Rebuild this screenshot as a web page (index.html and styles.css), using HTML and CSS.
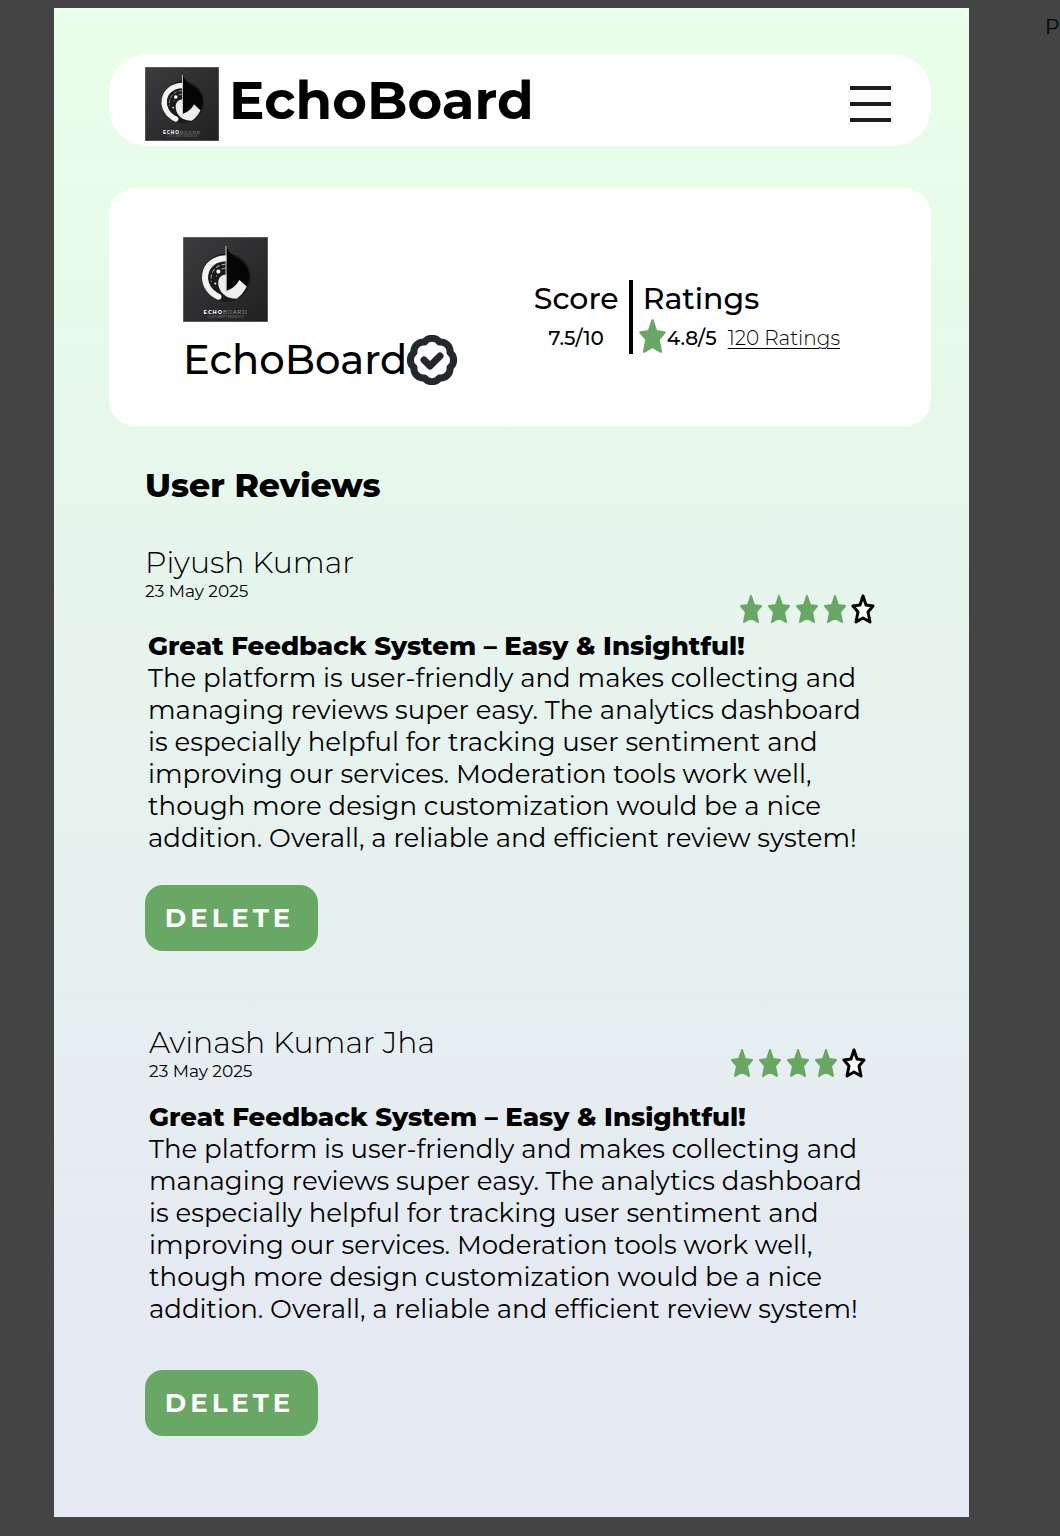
FILE: index.html
```html
<!DOCTYPE html>
<html lang="en">
<head>
<meta charset="utf-8">
<meta name="viewport" content="width=device-width, initial-scale=1">
<title>EchoBoard</title>
<link rel="stylesheet" href="styles.css">
</head>
<body>
<svg class="defs" aria-hidden="true">
  <defs>
    <linearGradient id="tile" x1="0" y1="0" x2="1" y2="1"><stop offset="0" stop-color="#3c3c3e"/><stop offset="1" stop-color="#202022"/></linearGradient>
    <linearGradient id="fold" x1="0" y1="0" x2="1" y2="0"><stop offset="0" stop-color="#999"/><stop offset=".5" stop-color="#eee"/></linearGradient>
    <symbol id="logo" viewBox="0 0 84 84">
      <path fill="url(#tile)" stroke="#888" d="M0 0h84v84H0z"/>
      <circle cx="43" cy="40" r="24" fill="#1a1a1b"/>
      <path fill="none" stroke="#f2f2f2" stroke-width="6" stroke-linecap="round" d="M42 21C18 22 15 50 35 59"/>
      <path fill="none" stroke="#aaa" stroke-dasharray="4 2" d="M42 27A14 14 0 0 0 28 44M42 31A9 9 0 0 0 33 39"/>
      <circle cx="35" cy="34" r="2" fill="#fff"/><circle cx="32" cy="46" r="1" fill="#fff"/>
      <path fill="#eee" d="M43 37C34 37 33 46 37 53Q42 61 53 61Q59 57 63 49L51 38Z"/>
      <path fill="url(#fold)" d="M43 38L56 42L43 54Z"/>
      <path fill="#050505" d="M43 9Q45 17 57 23Q70 34 63 49L56 42Q51 51 43 53Z"/>
      <path stroke="#ccc" d="M42.500 9V53"/>
      <text class="logo-name" x="42" y="76" text-anchor="middle"><tspan class="logo-strong">ECHO</tspan>BOARD</text>
      <text class="logo-tag" x="42" y="80" text-anchor="middle">CUSTOMER FEEDBACK</text>
    </symbol>
    <symbol id="star" viewBox="0 0 24 30"><path stroke-linejoin="round" d="M12 2L15 11L22 12L17 18L19 28L12 24L5 28L7 18L2 12L9 11Z"/></symbol>
  </defs>
</svg>
<main class="page">
  <header class="topbar">
    <svg class="topbar-logo" role="img" aria-label="EchoBoard logo"><use href="#logo"/></svg>
    <h1 class="brand">EchoBoard</h1>
    <button class="menu" type="button" aria-label="Menu"><svg viewBox="0 0 42 38"><path stroke="#1c1c1c" stroke-width="4" d="M1 3h41M1 19h41M1 35h41"/></svg></button>
  </header>

  <section class="summary">
    <div class="company">
      <svg class="company-logo" role="img" aria-label="EchoBoard logo"><use href="#logo"/></svg>
      <h2 class="company-name">EchoBoard
        <svg class="verified" viewBox="0 0 50 50" role="img" aria-label="Verified"><path fill="none" stroke="#24282e" stroke-width="7" stroke-linejoin="round" d="M17.500 7A9.500 9.500 0 0 1 32.500 7A9.500 9.500 0 0 1 43 17.500A9.500 9.500 0 0 1 43 32.500A9.500 9.500 0 0 1 32.500 43A9.500 9.500 0 0 1 17.500 43A9.500 9.500 0 0 1 7 32.500A9.500 9.500 0 0 1 7 17.500A9.500 9.500 0 0 1 17.500 7Z"/><path fill="none" stroke="#24282e" stroke-width="7" stroke-linecap="round" stroke-linejoin="round" d="M17 25L23 31L33 21"/></svg>
      </h2>
    </div>
    <div class="stats">
      <div class="score"><h3 class="stat-title">Score</h3><p class="stat-value">7.5/10</p></div>
      <div class="ratings">
        <h3 class="stat-title">Ratings</h3>
        <p class="stat-value rating-line"><svg class="rating-star"><use href="#star"/></svg>4.8/5<a class="rating-link" href="#reviews">120 Ratings</a></p>
      </div>
    </div>
  </section>

  <section class="reviews" id="reviews">
    <h2 class="reviews-title">User Reviews</h2>
    <article class="review">
      <div class="meta meta-tall">
        <div><h3 class="author">Piyush Kumar</h3><time class="date" datetime="2025-05-23">23 May 2025</time></div>
        <div class="stars" role="img" aria-label="4 out of 5 stars"><svg class="star"><use href="#star"/></svg><svg class="star"><use href="#star"/></svg><svg class="star"><use href="#star"/></svg><svg class="star"><use href="#star"/></svg><svg class="star star-empty"><use href="#star"/></svg></div>
      </div>
      <div class="comment">
        <h4 class="comment-title">Great Feedback System – Easy &amp; Insightful!</h4>
        <p class="comment-text">The platform is user-friendly and makes collecting and<br>managing reviews super easy. The analytics dashboard<br>is especially helpful for tracking user sentiment and<br>improving our services. Moderation tools work well,<br>though more design customization would be a nice<br>addition. Overall, a reliable and efficient review system!</p>
      </div>
      <button class="delete" type="button">DELETE</button>
    </article>
    <article class="review review-inset">
      <div class="meta">
        <div><h3 class="author">Avinash Kumar Jha</h3><time class="date" datetime="2025-05-23">23 May 2025</time></div>
        <div class="stars" role="img" aria-label="4 out of 5 stars"><svg class="star"><use href="#star"/></svg><svg class="star"><use href="#star"/></svg><svg class="star"><use href="#star"/></svg><svg class="star"><use href="#star"/></svg><svg class="star star-empty"><use href="#star"/></svg></div>
      </div>
      <div class="comment">
        <h4 class="comment-title">Great Feedback System – Easy &amp; Insightful!</h4>
        <p class="comment-text">The platform is user-friendly and makes collecting and<br>managing reviews super easy. The analytics dashboard<br>is especially helpful for tracking user sentiment and<br>improving our services. Moderation tools work well,<br>though more design customization would be a nice<br>addition. Overall, a reliable and efficient review system!</p>
      </div>
      <button class="delete" type="button">DELETE</button>
    </article>
  </section>
</main>
<aside class="side">P</aside>
</body>
</html>
```
FILE: styles.css
```css
* { box-sizing: border-box; }
body {
  margin: 0;
  padding: 8px 0 19px 54px;
  display: grid;
  grid-template-columns: minmax(0, 1fr) 91px;
  background: #444;
  color: #000;
  font-family: Montserrat, Inter, sans-serif;
}
h1, h2, h3, h4, p { margin: 0; font-weight: 400; }
button { border: 0; padding: 0; font: inherit; cursor: pointer; }
.defs { position: absolute; width: 0; height: 0; }
.logo-name { font-size: 5px; fill: #aaa; letter-spacing: 1px; }
.logo-strong { font-weight: 700; fill: #fff; }
.logo-tag { font-size: 3px; fill: #888; }

.page {
  padding: 46px 38px 81px 55px;
  background: linear-gradient(#e8ffe8, #e5e9f3 90%);
}
.side { padding: 6px 0 0 76px; font-size: 20px; line-height: 26px; }

.topbar {
  display: flex;
  align-items: center;
  height: 92px;
  padding: 0 40px 0 36px;
  border-radius: 38px;
  background: #fff;
}
.topbar-logo { width: 74px; height: 74px; margin-top: 8px; }
.brand { margin-left: 10px; font-size: 53px; line-height: 64px; font-weight: 700; }
.menu { margin: 8px 0 0 auto; width: 42px; height: 38px; background: none; }
.menu svg { display: block; width: 42px; height: 38px; }

.summary {
  display: flex;
  justify-content: space-between;
  margin-top: 42px;
  height: 238px;
  padding: 49px 91px 0 74px;
  border-radius: 26px;
  background: #fff;
}
.company-logo { display: block; width: 85px; height: 85px; }
.company-name { display: flex; align-items: center; margin-top: 12px; font-size: 40px; line-height: 52px; font-weight: 500; }
.verified { width: 50px; height: 50px; }
.stats { display: flex; height: 74px; margin-top: 43px; }
.score { padding-right: 10px; text-align: center; border-right: 4px solid #000; }
.ratings { padding-left: 10px; }
.stat-title { font-size: 30px; line-height: 38px; font-weight: 500; }
.stat-value { font-size: 20px; line-height: 40px; font-weight: 500; }
.rating-line { display: flex; align-items: center; margin-left: -5px; height: 40px; }
.rating-star { width: 29px; height: 36px; margin-bottom: 4px; fill: #69a765; stroke: #69a765; stroke-width: 2px; }
.rating-link { margin-left: 11px; color: #000; font-weight: 300; text-underline-offset: 3px; text-decoration-thickness: 1px; }

.reviews { padding: 37px 56px 0 36px; }
.reviews-title { font-size: 33px; line-height: 44px; font-weight: 800; }
.review { margin-top: 38px; }
.review + .review { margin-top: 74px; }
.meta { display: flex; justify-content: space-between; }
.meta-tall { min-height: 79px; align-items: flex-start; }
.meta-tall .stars { align-self: flex-end; }
.author { font-size: 30px; line-height: 36px; font-weight: 300; }
.date { display: block; font-size: 17px; line-height: 20px; }
.stars { display: flex; gap: 4px; }
.star { width: 24px; height: 30px; fill: #69a765; stroke: #69a765; stroke-width: 2px; }
.star-empty { fill: #fff; stroke: #000; stroke-width: 3px; }
.comment { padding: 6px 0 0 3px; line-height: 32px; white-space: nowrap; }
.comment-title { font-size: 26px; line-height: 32px; font-weight: 800; }
.comment-text { font-size: 26px; }
.delete {
  display: block;
  margin-top: 31px;
  padding-right: 4px;
  width: 173px;
  height: 66px;
  border-radius: 18px;
  background: #69a765;
  color: #fff;
  font-size: 26px;
  font-weight: 700;
  letter-spacing: 4px;
}
.review-inset .meta { padding: 0 9px 0 4px; }
.review-inset .stars { margin-top: 23px; }
.review-inset .comment { padding: 20px 0 0 4px; }
.review-inset .delete { margin-top: 45px; }
```
